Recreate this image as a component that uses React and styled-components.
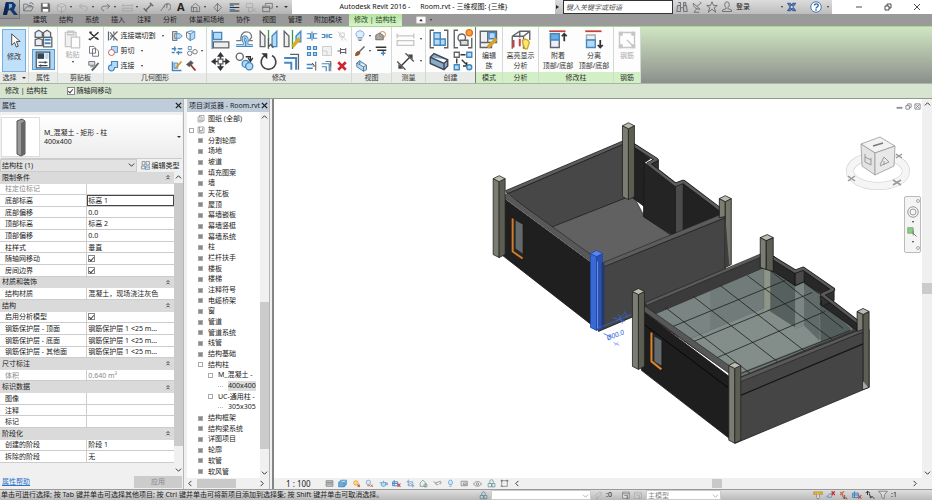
import React, { useState } from "react";
import styled, { createGlobalStyle, css } from "styled-components";

const GlobalStyle = createGlobalStyle`
  * {
    box-sizing: border-box;
  }

  body {
    margin: 0;
    overflow: hidden;
    background: #f0f0f0;
    color: #222;
    font: 7px/10px "Noto Sans", "Noto Sans CJK SC", sans-serif;
  }

  button,
  input,
  select {
    margin: 0;
    padding: 0;
    border: 0;
    border-radius: 0;
    background: none;
    color: inherit;
    font: inherit;
  }

  ul {
    margin: 0;
    padding: 0;
    list-style: none;
  }
`;

/* ---------- icons ---------- */

const Svg = styled.svg`
  display: block;
  flex: none;
  width: ${props => props.$size || 12}px;
  height: ${props => props.$size || 12}px;
  fill: none;
  stroke: #606468;
  stroke-width: 1.1;
  opacity: ${props => (props.$dim ? 0.35 : 1)};
`;

const BLUE = "#4486bf";
const SKY = "#b4daf5";

const shapes = {
  open: <path d="M1 13V3h5l1 2h5v2M1 13l4-6h10l-3 6zM9 2l4-1 2 3" />,
  save: (
    <>
      <path d="M2 2h11l1 1v11H2z" fill="#666" />
      <path d="M4 2h7v5H4zM4 10h8v4H4z" fill="#fff" stroke="none" />
    </>
  ),
  cube: <path d="M2 5l6-3 6 3v6l-6 4-6-4zM2 5l6 3 6-3M8 8v7" fill="#ddd" />,
  undo: <path d="M6 3L2 6l4 4M2 6h8c5 0 5 6 0 7" />,
  redo: <path d="M10 3l4 3-4 4M14 6H6c-5 0-5 6 0 7" />,
  measure: <path d="M1 5h14M1 3v4M15 3v4M1 9h14v4H1z" />,
  dimension: <path d="M3 13L13 3M1 9l5 5M10 1l5 5" strokeWidth="1.8" />,
  tag: <path d="M1 13L6 6M6 8a5 5 0 1 1 6 4M8 4h4M10 4v5" />,
  house: <path d="M2 7l6-5 6 5v7H2zM5 14V8h5v6M2 7l3 1" />,
  section: <path d="M8 2L3 8l5 6 6-6zM8 2v12" />,
  thin: (
    <>
      <path d="M1 3h14M1 8h14M1 13h14" stroke="#333" strokeWidth="1.6" />
      <path d="M1 5h6M1 11h8" stroke={BLUE} strokeWidth="2" />
    </>
  ),
  hidden: <path d="M2 2h9v6H2zM5 8v6h4M10 9l5 5M15 9l-5 5" />,
  windows: <path d="M5 5V2h10v7h-4M1 6h10v8H1zM1 8h10" />,
  binoculars: <path d="M2 6h4v8H1zM10 6h4l1 8h-5zM3 2h3v4M10 6V2h3v4M6 9h4" fill="#bbb" />,
  dish: <path d="M3 3c0 5 3 8 9 8M3 3l9 8M8 7l5-4M7 11l-3 4h7M12 1l2 2" />,
  star: <path d="M8 1l2 5h5l-4 3 2 6-5-4-5 4 2-6-4-3h5z" />,
  user: <path d="M5 5a3 4 0 1 1 6 0c0 3-2 3-2 5l5 2v2H2v-2l5-2c0-2-2-2-2-5z" />,
  exchange: (
    <>
      <path d="M2 3h4l7 10h-4zM13 3H9L2 13h4z" fill="#5d82b7" stroke="#244e8c" />
      <path d="M6 8h4" stroke="#fff" />
    </>
  ),
  help: (
    <>
      <circle cx="8" cy="8" r="7" fill="#fff" stroke="#2762a5" />
      <path d="M6 6c0-3 5-3 5 0 0 2-3 2-3 4M8 11v2" stroke="#2762a5" strokeWidth="1.8" />
    </>
  ),
  cursor: <path d="M5 1v12l3-3 2 5 2-1-2-5h4z" fill="#fff" stroke="#444" strokeWidth="1" />,
  typeProps: (
    <>
      <path d="M1 3l3-2 3 2v4H1zM8 3l3-2 3 2v4H8zM1 9l3-1 3 1v5H1z" fill="#e8eef3" />
      <path d="M8 7h7v8H8z" fill="#fff" />
      <path d="M9 9h5M9 12h5" stroke={BLUE} strokeWidth="1.6" />
    </>
  ),
  props: (
    <>
      <path d="M2 1h12v14H2z" fill="#fff" stroke="#456" />
      <path d="M3 2h6v5H3z" fill="#345" stroke="none" />
      <path d="M10 2h3v5h-3z" fill={SKY} stroke="none" />
      <path d="M4 10h8M4 13h8M10 9v2M6 12v2" stroke="#345" />
    </>
  ),
  paste: (
    <>
      <path d="M2 2h9v12H2zM4 1h5v3H4z" fill="#ddd" />
      <path d="M7 6h7v9H7z" fill="#fff" />
    </>
  ),
  cut: <path d="M2 3l10 9M14 3L4 12M2 3l3 0M14 13l-3-3M4 13l-3-1" stroke="#333" strokeWidth="2" />,
  copy: <path d="M2 2h6l2 2v7H2zM6 5h5l3 3v7H6z" fill="#fff" />,
  match: (
    <>
      <path d="M1 2h8v5H1zM3 9h5" fill="#ddd" />
      <path d="M14 4l-6 7-3 3" strokeWidth="2.5" />
    </>
  ),
  cope: <path d="M2 2v12M4 8h4l6-6M8 8l6 6M4 3l4 5-4 5M9 2v3M9 14v-3" strokeWidth="1.6" />,
  cutGeom: (
    <>
      <path d="M6 2h8v8H6z" fill={SKY} stroke={BLUE} />
      <circle cx="6" cy="10" r="4" fill="#fff" stroke="#b44" />
    </>
  ),
  joinGeom: (
    <path d="M6 2h8v8h-4c0 7-9 5-8 0 0-2 2-4 4-3z" fill={SKY} stroke={BLUE} strokeWidth="1.6" />
  ),
  wallJoin: (
    <>
      <path d="M2 2h6v3H5v6h3v3H2z" fill="#ccc" />
      <path d="M7 5h5l3 3-3 3H7z" fill={SKY} stroke={BLUE} />
    </>
  ),
  splitFace: (
    <>
      <path d="M2 3l5 2v9l-5-4z" fill="#eee" />
      <path d="M7 5l6-3v9l-6 3zM2 3l6-2 5 1" fill={SKY} stroke={BLUE} />
    </>
  ),
  beamJoin: <path d="M1 5h6M9 5h6M1 10h4M7 10h8M5 2v6M10 8v5" stroke={BLUE} strokeWidth="1.8" />,
  unjoin: (
    <>
      <path d="M3 2h4v4H3z" stroke={BLUE} />
      <circle cx="5" cy="11" r="3" />
      <circle cx="12" cy="9" r="3" />
    </>
  ),
  paint: (
    <>
      <path d="M2 2v12h12" stroke={BLUE} strokeWidth="2" />
      <path d="M4 4h5v7H4z" fill={SKY} stroke={BLUE} />
      <path d="M6 11l8-9" stroke="#d79a2d" strokeWidth="2.5" />
    </>
  ),
  hammer: (
    <>
      <path d="M2 6l6-5 3 3-5 5z" fill="#555" />
      <path d="M8 7l6 7" stroke="#933" strokeWidth="2.5" />
    </>
  ),
  align: (
    <>
      <path d="M1 0v16" stroke={BLUE} />
      <path d="M2 2h7v6H2z" fill={SKY} stroke={BLUE} />
      <path d="M2 10h13v5H2z" fill="#eee" />
    </>
  ),
  offset: (
    <>
      <path d="M1 9h4V6c1-6 9-6 9 0l-2 3h3" stroke="#777" />
      <path d="M1 13h7v-2C4 4 12 4 10 11v2h5" stroke={BLUE} strokeWidth="2.6" />
      <path d="M1 13h7v-2C4 4 12 4 10 11v2h5" stroke={SKY} />
    </>
  ),
  mirrorAxis: (
    <>
      <path d="M1 1v13h4V5z" fill="#eee" />
      <path d="M15 1v13h-4V5z" fill={SKY} stroke={BLUE} />
      <path d="M8 0v16" stroke="#359b45" />
      <path d="M8 7v7l2-2 2 3" stroke="#555" fill="#fff" />
    </>
  ),
  mirrorDraw: (
    <>
      <path d="M1 1v13h4V5z" fill="#eee" />
      <path d="M15 1v9h-4V5z" fill={SKY} stroke={BLUE} />
      <path d="M8 0v16" stroke="#359b45" />
      <path d="M8 14l6-7" stroke="#d8ad24" strokeWidth="2.8" />
    </>
  ),
  move: (
    <>
      <path d="M8 2v12M2 8h12" stroke="#333" strokeWidth="1.4" />
      <path d="M8 0l3 4H5zM8 16l3-4H5zM0 8l4-3v6zM16 8l-4-3v6z" fill="#333" stroke="none" />
      <path d="M6 6h4v4H6z" fill="#fff" />
    </>
  ),
  copyItems: (
    <>
      <circle cx="4" cy="4" r="3" />
      <path d="M9 4h4v3M11 5l2 3 2-3" stroke="#333" />
      <circle cx="9" cy="10" r="3" fill={SKY} stroke={BLUE} />
      <circle cx="12" cy="12" r="3" fill={SKY} stroke={BLUE} />
    </>
  ),
  rotate: (
    <>
      <path d="M5 3a6.2 6.2 0 1 0 6 0" stroke="#444" strokeWidth="1.4" />
      <path d="M2 1h5v5z" fill="#333" stroke="none" />
    </>
  ),
  trim: (
    <>
      <path d="M1 5h10v10M1 9h6v6" stroke={BLUE} strokeWidth="1.6" />
      <path d="M6 2h7v7M13 2v13" />
    </>
  ),
  split: <path d="M1 5h5v6H1M15 5h-5v6h5M8 2v12" stroke={BLUE} strokeWidth="1.5" />,
  gap: <path d="M1 6h4v4H1M15 6h-4v4h4M6 8h4M8 5v6" stroke={BLUE} strokeWidth="1.5" />,
  unpin: <path d="M2 2l12 12M5 4h6v5H5zM8 9v5" />,
  array: <path d="M2 2h4v4H2zM10 2h4v4h-4zM2 10h4v4H2zM10 10h4v4h-4z" fill={SKY} stroke={BLUE} strokeWidth="1.6" />,
  scale: <path d="M2 2h12v12H2zM2 8h6v6" fill="#ddd" />,
  pin: <path d="M2 8h4M6 4v8M6 6h7v4H6M13 4v8" strokeWidth="1.4" />,
  extend: (
    <>
      <path d="M1 6h8M1 11h8" stroke={BLUE} strokeWidth="2" />
      <path d="M13 2v12M8 4l3 3M9 8h3" stroke="#333" />
    </>
  ),
  remove: <path d="M3 3l10 10M13 3L3 13" stroke="#d02434" strokeWidth="3.6" />,
  bulb: (
    <>
      <path d="M5 10C0 5 4 1 8 1s8 4 3 9z" fill="#dcefff" stroke="#6e9ad0" />
      <path d="M5 12h6M6 14h4" />
    </>
  ),
  displace: (
    <>
      <path d="M1 7l5-3 5 3v6H1z" fill="#aaa" />
      <circle cx="10" cy="6" r="4" stroke="#c27b32" />
    </>
  ),
  brush: (
    <>
      <path d="M14 2L7 9" strokeWidth="2" />
      <path d="M2 14c0-4 3-7 6-4 0 3-3 4-6 4z" fill="#9c5b27" stroke="#7b4219" />
    </>
  ),
  linework: (
    <>
      <path d="M1 3h14M3 7h12" stroke="#333" strokeWidth="1.8" />
      <path d="M8 11h6M11 8v6" stroke={BLUE} strokeWidth="2" />
    </>
  ),
  box: <path d="M1 4l4-3 9 6v6l-4 2-9-6zM1 4l9 5 4-2M10 9v6M5 1v5" fill={SKY} stroke="#446a8c" />,
  angle: (
    <>
      <path d="M3 13L13 3" stroke="#333" />
      <path d="M1 8l7 7M8 1l7 7" stroke="#555" />
      <path d="M2 14v-4l4 4zM14 2v4l-4-4z" fill="#444" stroke="none" />
    </>
  ),
  assembly: (
    <>
      <path d="M4 1H1v14h3M12 1h3v14h-3" />
      <path d="M4 3h5v5h4v5H4zM4 8h5v5" fill={SKY} stroke={BLUE} />
    </>
  ),
  group: (
    <>
      <path d="M4 1H1v14h3M12 15h3V7" />
      <circle cx="7" cy="7" r="3" />
      <path d="M6 9h6v4H6z" fill="#ddd" />
      <circle cx="13" cy="3" r="2.5" fill="#f6a040" stroke="#e0741f" />
    </>
  ),
  parts: <path d="M1 5l3-3 11 5v5l-3 3L1 10zM1 5l11 5 3-3M12 10v5" fill="#86aecb" stroke="#445" />,
  similar: (
    <>
      <path d="M1 1h4v4H1z" />
      <path d="M11 1h4v4h-4zM1 11h4v4H1z" fill={SKY} stroke={BLUE} />
      <path d="M6 3h4M3 6v4M7 7l4 4M11 9v3H8" stroke="#333" />
      <circle cx="13" cy="13" r="2" fill={SKY} stroke={BLUE} />
    </>
  ),
  editFamily: (
    <>
      <path d="M1 1h13v9H1zM1 10h9v4H1zM7 1v9" fill="#eef2f5" />
      <path d="M8 2h5v5H8z" fill={SKY} stroke={BLUE} />
      <path d="M7 14l7-7" stroke="#d8a22a" strokeWidth="2.8" />
    </>
  ),
  analysis: (
    <>
      <path d="M1 5l6-4h8v7M1 5h9l5-4M10 5v10M7 1v5M1 5v10" />
      <path d="M2 8v6M7 7v6" stroke="#c54040" strokeWidth="1.6" />
      <path d="M9 9c2-3 7-1 5 3l-1 3h-2z" fill="#ffe873" stroke="#d3a72a" />
    </>
  ),
  attach: (
    <>
      <path d="M1 1h13" stroke="#c63f34" strokeWidth="1.4" />
      <path d="M2 3h7v11H2z" fill="#eef" />
      <path d="M2 3h7v5H2z" fill="#66afe0" stroke={BLUE} />
      <path d="M13 9V3M11 5l2-2 2 2" stroke="#333" strokeWidth="1.4" />
    </>
  ),
  detach: (
    <>
      <path d="M1 1h13" stroke="#c63f34" strokeWidth="1.4" />
      <path d="M2 4h7v4H2z" fill="#eee" stroke="#aaa" />
      <path d="M2 8h7v6H2z" fill={SKY} stroke={BLUE} />
      <path d="M13 8v6M11 12l2 2 2-2" stroke="#333" strokeWidth="1.4" />
    </>
  ),
  rebar: (
    <>
      <path d="M2 2h12v12H2zM8 8l4 4" />
      <path d="M2 2h2v2H2zM12 2h2v2h-2zM2 12h2v2H2zM12 12h2v2h-2z" fill="#555" />
    </>
  ),
  media: (
    <>
      <path d="M1 3h14v10H1z" fill="#fff" stroke="#ddd" />
      <path d="M5 10l3-4 3 4z" fill="#333" stroke="none" />
    </>
  ),
  editType: (
    <>
      <path d="M2 1h5v6H2zM9 1h6v6H9zM1 9h6v5H1z" />
      <path d="M8 9h7v6H8zM8 12h7" stroke={BLUE} />
    </>
  ),
  sheets: <path d="M2 4h8v10H2zM5 4V1h9v11h-4M4 8h4M4 11h4" />,
  family: <path d="M2 2h12v12H2zM5 2v7h6V4M5 9v3h6" />,
  detail: <path d="M2 3h12v10H2zM3 6h10M3 9h10" fill="#ccc" />,
  style: <path d="M1 6l4-4h10v8l-4 4H1zM1 6h10l4-4M11 6v8" fill="#68abd8" stroke={BLUE} />,
  sun: (
    <>
      <circle cx="7" cy="7" r="4" fill="#ffd97a" stroke="#d48b29" />
      <path d="M10 10l4 4M14 10l-4 4" stroke="#d24b35" strokeWidth="1.8" />
    </>
  ),
  shadow: (
    <>
      <circle cx="6" cy="6" r="4" fill="#d6e6f3" stroke="#7290a8" />
      <path d="M4 12h5M10 10l4 4M14 10l-4 4" stroke="#b45a5a" strokeWidth="1.6" />
    </>
  ),
  teapot: <path d="M4 6h8v5l-2 2H6l-2-2zM4 8L1 6M12 7h3v3h-3M8 3v3" fill={SKY} stroke={BLUE} />,
  crop: (
    <>
      <path d="M1 5h9v7H1zM4 2v10M1 8h9" stroke={BLUE} strokeWidth="1.6" />
      <path d="M10 8l5 6M15 8l-5 6" stroke="#c84141" strokeWidth="1.8" />
    </>
  ),
  showCrop: <path d="M4 1v11h11M1 5h11v10M5 11c1-4 5-4 6 0" stroke={BLUE} />,
  lock3d: <path d="M2 7l5-5 5 5v6H2zM9 9h5v5H9z" stroke="#4e8770" />,
  glasses: <path d="M1 5l4 2 8-3M5 7c0 4 3 5 4 2M13 4c3 3 0 6-2 4" />,
  reveal: <path d="M6 10C3 6 5 2 8 2s5 4 2 8zM6 13h4" fill="#cdeaff" stroke={BLUE} />,
  temp: <path d="M2 4h11v8H2zM6 7h5v3H6z" />,
  eye: <path d="M1 9c3-6 11-6 14 0-3 5-11 5-14 0zM6 9a2 2 0 1 0 4 0 2 2 0 1 0-4 0" />,
  constraints: <path d="M3 3h10v10H3zM1 3h4M11 3h4M1 13h4M3 1v4M13 1v4" />,
  workset: <path d="M2 8h6v6H2zM5 8V3l3-2 3 2v4M9 8h5v6H9z" stroke="#3a7f8a" />,
  press: <path d="M3 8l6-6 5 1-5 7-4 5v-5z" fill="#ccc" />,
  design: <path d="M1 2h12v11H1zM1 5h12M4 8h6v5M9 8v7" fill="#ddd" />,
  link: (
    <>
      <path d="M1 3h14v4H1z" fill="#dfb84a" stroke="#b48c22" />
      <path d="M6 7v5l2 3 2-3V7" fill="#eee" />
    </>
  ),
  underlay: (
    <>
      <path d="M1 11l5-5h5l-3 6z" stroke={BLUE} />
      <path d="M9 2l5 6M14 2L9 8" stroke="#c33" strokeWidth="2" />
    </>
  ),
  pinned: (
    <>
      <path d="M2 3l5 6M2 8l6-6M5 8l3 6" stroke="#c96a45" strokeWidth="2" />
      <path d="M9 8v6l2-2 2 3" stroke="#333" />
    </>
  ),
  drag: <path d="M4 8V2M1 5l3-3 4 3M7 6l2 7 2-3 4 4" stroke="#333" strokeWidth="1.6" />,
  filter: <path d="M1 2h14l-5 6v6l-4-2V8z" fill="#ddd" />
};

const Icon = ({ name, size, dim }) => (
  <Svg viewBox="0 0 16 16" $size={size} $dim={dim} aria-hidden="true">
    {shapes[name]}
  </Svg>
);

const Caret = styled.span`
  flex: none;
  border: 2px solid transparent;
  border-top-color: #333;
  border-bottom-width: 0;
  ${props =>
    props.$small &&
    css`
      border-width: 1px 1px 0;
      border-top-width: 2px;
    `}
`;

const chevrons = {
  up: "M1 5l3-3 3 3",
  down: "M1 3l3 3 3-3",
  left: "M5 1L2 4l3 3",
  right: "M3 1l3 3-3 3"
};

const Chevron = ({ dir, dim }) => (
  <Svg viewBox="0 0 8 8" $size={7} $dim={dim} aria-hidden="true">
    <path d={chevrons[dir]} stroke="#333" />
  </Svg>
);

/* ---------- title bar ---------- */

const Window = styled.div`
  display: flex;
  flex-direction: column;
  height: 100vh;
`;

const TopRow = styled.header`
  display: flex;
  background: #9c9c9c;
`;

const AppButton = styled.button`
  width: 20px;
  height: 19px;
  margin-bottom: -5px;
  display: grid;
  place-items: center;
  background: linear-gradient(#bdbdbd, #8d8d8d);
  border-right: 1px solid #777;
  border-bottom: 1px solid #777;
  z-index: 1;
`;

const TitleBar = styled.div`
  flex: 1;
  display: flex;
  height: 14px;
  background: #fff;
`;

const QuickAccess = styled.div`
  width: 272px;
  display: flex;
  align-items: center;
  justify-content: space-between;
  padding: 0 4px 0 3px;
  background: linear-gradient(#d8d8d8, #b4b4b4);
`;

const ToolButton = styled.button`
  display: flex;
  align-items: center;
  justify-content: center;
  gap: ${props => props.$gap || 3}px;
  ${props => props.$bold && "font: bold 11px/12px 'Open Sans', sans-serif;"}
`;

const WindowTitle = styled.div`
  flex: 1;
  display: flex;
  align-items: center;
  justify-content: center;
  gap: 10px;
  white-space: nowrap;
  color: #111;
`;

const InfoCenter = styled.div`
  width: 277px;
  display: flex;
  align-items: center;
  gap: 3px;
  padding-right: 3px;
  background: linear-gradient(#dcdcdc, #bcbcbc);
`;

const SearchArrow = styled.button`
  width: 5px;
  padding-left: 1px;

  &::after {
    content: "";
    display: block;
    border: 2px solid transparent;
    border-left: 3px solid #222;
    border-right: 0;
  }
`;

const SearchInput = styled.input`
  width: 110px;
  height: 14px;
  padding: 0 2px;
  background: #fff;
  border: 1px solid #333;
  font-style: italic;

  &::placeholder {
    color: #555;
    opacity: 1;
  }
`;

const Spacer = styled.span`
  flex: ${props => (props.$width ? `0 0 ${props.$width}px` : 1)};
`;

const WindowButtons = styled.div`
  width: 100px;
  display: flex;
  align-items: center;
  justify-content: space-around;
  padding-left: 12px;
`;

/* ---------- ribbon ---------- */

const Tabs = styled.nav`
  display: flex;
  align-items: stretch;
  height: 12px;
  padding-left: 27px;
  background: #9a9a9a;
`;

const Tab = styled.button`
  padding: 0 6px;
  color: #222;
  white-space: nowrap;
  ${props =>
    props.$active &&
    css`
      margin-left: 1px;
      padding: 0 5px;
      color: #234b1c;
      background: linear-gradient(#b5e3a0, #d9f3cc);
    `}
`;

const Ribbon = styled.div`
  display: flex;
  height: 58px;
  border-top: 1px solid #a9d596;
  border-bottom: 1px solid #a8b8a0;
  background: linear-gradient(#cfe6c1, #8c8f8c);
`;

const PanelBox = styled.section`
  width: ${props => props.$width}px;
  display: flex;
  flex-direction: column;
  background: #fdfdfd;
  border-right: 1px solid ${props => (props.$last ? "#777" : "#d5d9d5")};
`;

const PanelBody = styled.div`
  flex: 1;
  display: flex;
  justify-content: center;
  align-items: flex-start;
  padding-top: 1px;
`;

const PanelLabel = styled.div`
  height: 11px;
  display: flex;
  align-items: center;
  justify-content: center;
  gap: 5px;
  color: #333;
  background: ${props => (props.$green ? "#d3efc5" : "#e9ebe9")};
`;

const Panel = ({ title, width, green, last, caret, children }) => (
  <PanelBox $width={width} $last={last}>
    <PanelBody>{children}</PanelBody>
    <PanelLabel $green={green}>
      {title}
      {caret && <Caret />}
    </PanelLabel>
  </PanelBox>
);

const IconGrid = styled.div`
  display: grid;
  grid-template-columns: repeat(${props => props.$cols}, ${props => props.$cell}px);
  grid-auto-rows: ${props => (props.$big ? 22 : 15)}px;
  align-items: center;
  justify-items: center;
`;

const LargeButton = styled.button`
  width: ${props => props.$width || 24}px;
  height: 44px;
  display: flex;
  flex-direction: column;
  align-items: center;
  gap: 1px;
  padding-top: 2px;
  color: ${props => (props.disabled ? "#aaa" : "#333")};
  white-space: nowrap;
`;

const SelectedTool = styled(LargeButton)`
  height: 43px;
  margin-top: 1px;
  padding-top: 3px;
  gap: 4px;
  background: #bfe0f8;
  border: 1px solid #76aedb;
`;

const ToggleTool = styled.button`
  width: 23px;
  height: 21px;
  display: grid;
  place-items: center;
  ${props =>
    props.$on &&
    css`
      background: #aed6f4;
      border: 1px solid #5c9ccc;
    `}
`;

const TextTool = styled.button`
  display: flex;
  align-items: center;
  gap: 2px;
  width: 100%;
  white-space: nowrap;

  ${Caret} {
    margin-left: 4px;
  }
`;

const GeometryTools = styled.div`
  display: grid;
  grid-template-columns: 64px 14px 19px;
  grid-auto-rows: 15px;
  align-items: center;
`;

const OptionsBar = styled.div`
  display: flex;
  align-items: center;
  gap: 14px;
  height: 15px;
  padding-left: 5px;
  background: #d7e5d0;
  border-bottom: 1px solid #8e9b8a;
`;

const OptionLabel = styled.label`
  display: flex;
  align-items: center;
  gap: 2px;
  padding-left: 5px;
`;

const Checkbox = styled.input.attrs({ type: "checkbox" })`
  appearance: none;
  display: block;
  width: ${props => props.$size || 7}px;
  height: ${props => props.$size || 7}px;
  background: #fff;
  border: 1px solid #888;

  &:checked::after {
    content: "";
    display: block;
    width: 2px;
    height: 4px;
    margin: 0 auto;
    border: solid #444;
    border-width: 0 1px 1px 0;
    transform: rotate(40deg);
  }
`;

/* ---------- docked palettes ---------- */

const Workspace = styled.main`
  flex: 1;
  display: flex;
  min-height: 0;
  background: #f0f0f0;
`;

const Palette = styled.section`
  width: ${props => props.$width}px;
  display: flex;
  flex-direction: column;
  margin-right: ${props => props.$gap}px;
  border-right: 1px solid #b5b5b5;
  background: #f0f0f0;
`;

const PaletteHeader = styled.div`
  display: flex;
  align-items: center;
  justify-content: space-between;
  height: 13px;
  padding: 0 1px 0 2px;
  background: #bfcddb;
  white-space: nowrap;
`;

const CloseButton = styled.button`
  width: 8px;
  height: 10px;
  display: grid;
  place-items: center;
`;

const TypeSelector = styled.button`
  display: flex;
  align-items: center;
  gap: 4px;
  height: 44px;
  margin: 3px 1px 0;
  padding-right: 1px;
  background: linear-gradient(#fff, #ececec);
  border-bottom: 1px solid #ccc;
  text-align: left;
`;

const TypePreview = styled.span`
  width: 39px;
  height: 40px;
  display: grid;
  place-items: center;
  background: #fff;
  border: 1px solid #ddd;
`;

const TypeName = styled.span`
  flex: 1;
  line-height: 9px;
`;

const FilterRow = styled.div`
  display: flex;
  height: 13px;
`;

const SelectBox = styled.div`
  position: relative;
  width: ${props => props.$width}px;
  height: 100%;
  background: ${props => props.$bg || "#fff"};
  border: 1px solid #ccc;
  color: ${props => props.$color || "inherit"};

  svg {
    position: absolute;
    right: 1px;
    top: 1px;
    pointer-events: none;
  }

  select {
    display: block;
    appearance: none;
    width: 100%;
    height: 100%;
    padding-left: 1px;
    line-height: 9px;
  }
`;

const EditTypeButton = styled.button`
  flex: 1;
  display: flex;
  align-items: center;
  justify-content: center;
  gap: 2px;
`;

const ScrollArea = styled.div`
  flex: 1;
  display: flex;
  min-height: 0;
`;

const TableArea = styled.div`
  flex: 1;
`;

const PropertyTable = styled.table`
  width: 100%;
  height: 291px;
  border-collapse: collapse;
  table-layout: fixed;
  background: #fff;

  th,
  td {
    padding: 0 1px;
    line-height: 9px;
    font-weight: normal;
    text-align: left;
    white-space: nowrap;
    overflow: hidden;
    border-bottom: 1px solid #ccc;
  }

  th {
    width: 87px;
    padding-left: 5px;
    border-right: 1px solid #ccc;
  }
`;

const GroupCell = styled.th`
  && {
    padding-left: 2px;
    background: #dadada;
    border-color: #dadada;
  }

  div {
    display: flex;
    justify-content: space-between;
    align-items: center;
    padding-right: 1px;
  }
`;

const ValueInput = styled.input`
  display: block;
  width: 100%;
  height: 9px;
  ${props => props.$focused && "outline: 1px solid #444;"}
`;

const PropRow = styled.tr`
  color: ${props => (props.$muted ? "#888" : "inherit")};
`;

const ScrollTrack = styled.div`
  flex: none;
  width: ${props => props.$width || 9}px;
  display: grid;
  grid-template-rows: 11px ${props => props.$before}fr ${props => props.$thumb}fr ${props => props.$after}fr 11px;
  justify-items: center;
  align-items: center;
  background: #f0f0f0;

  span {
    grid-row: 3;
    width: 100%;
    height: 100%;
    background: #cbcbcb;
  }

  svg:last-child {
    grid-row: 5;
  }
`;

const PaletteFooter = styled.div`
  display: flex;
  justify-content: space-between;
  align-items: center;
  height: 14px;
  padding: 0 1px 0 2px;
`;

const HelpLink = styled.a`
  color: #2a74c9;
`;

const ApplyButton = styled.button`
  width: 48px;
  height: 12px;
  background: #cccccc;
  color: #888;
`;

const Tree = styled.ul`
  flex: 1;
  min-width: 0;
  display: flex;
  flex-direction: column;
  padding: 2px 0 1px;
  background: #fff;
`;

const TreeItem = styled.li`
  flex: 1;
  display: flex;
  align-items: center;
  gap: ${props => (props.$level === 0 ? 3 : 5)}px;
  min-height: 0;
  padding-left: ${props => [2, 11, 21, 31][props.$level]}px;
  white-space: nowrap;

  b {
    font-weight: normal;
    background: ${props => (props.$selected ? "#dcdcdc" : "none")};
  }
`;

const Toggle = styled.span`
  flex: none;
  width: 5px;
  height: 5px;
  border: ${props => (props.$blank ? "0" : "1px solid #aaa")};
  background: ${props => (props.$blank ? "none" : props.$open ? "#fff" : "#888")};
  ${props =>
    props.$leaf &&
    css`
      height: 1px;
      border: 0;
      background: none;
      border-bottom: 1px dotted #bbb;
    `}
`;

const BottomScroll = styled.div`
  flex: ${props => (props.$grow ? 1 : "none")};
  display: grid;
  grid-template-columns: 9px ${props => props.$before}fr ${props => props.$thumb}fr ${props => props.$after}fr 11px;
  align-items: center;
  height: 11px;
  background: #f0f0f0;

  span {
    grid-column: 3;
    height: 9px;
    background: #c9c9c9;
  }

  svg:last-child {
    grid-column: 5;
  }
`;

/* ---------- drawing view ---------- */

const View = styled.section`
  flex: 1;
  min-width: 0;
  display: flex;
  flex-direction: column;
  border-left: 2px solid #858585;
`;

const Canvas = styled.div`
  position: relative;
  flex: 1;
  min-width: 0;
  background: #fff;
`;

const Scene = styled.svg`
  position: absolute;
  width: 100%;
  height: 100%;
  stroke: #161616;
  stroke-width: 0.8;
  stroke-linejoin: round;
`;

const ViewButtons = styled.div`
  position: absolute;
  top: 4px;
  right: 1px;
  display: flex;
  gap: 2px;
`;

const CubeSvg = styled.svg`
  position: absolute;
  top: 34px;
  right: 10px;
  width: 68px;
  height: 62px;
  fill: #eee;
  stroke: #999;
`;

const NavigationBar = styled.div`
  position: absolute;
  top: 97px;
  right: 1px;
  width: 17px;
  height: 57px;
  display: flex;
  flex-direction: column;
  align-items: center;
  justify-content: space-between;
  padding: 2px 0;
  background: #f4f4f4;
  border: 1px solid #bbb;
  border-radius: 2px;
`;

const NavDot = styled.span`
  width: 4px;
  height: 4px;
  align-self: flex-end;
  border: 1px solid #aaa;
  border-radius: 2px;
`;

const ViewFooter = styled.div`
  display: flex;
  height: 11px;
  background: #f0f0f0;
`;

const ViewControls = styled.div`
  width: 250px;
  display: flex;
  align-items: center;
  justify-content: space-between;
  padding: 0 3px 0 12px;
`;

const Scale = styled.span`
  width: 34px;
  font-size: 8px;
`;

const ScrollCorner = styled.div`
  width: 10px;
`;

const StatusBar = styled.footer`
  display: flex;
  align-items: center;
  height: 11px;
  background: linear-gradient(#dedede, #b9b9b9);
  border-top: 1px solid #999;
`;

const StatusText = styled.div`
  flex: 1;
  min-width: 0;
  padding-left: 1px;
  white-space: nowrap;
`;

const StatusTools = styled.div`
  width: 453px;
  height: 100%;
  display: flex;
  align-items: center;
  gap: 3px;
`;

/* ---------- data ---------- */

const tabs = ["建筑", "结构", "系统", "插入", "注释", "分析", "体量和场地", "协作", "视图", "管理", "附加模块"];

const quickTools = [
  ["open"],
  ["save"],
  ["cube", true, true],
  ["undo", true, true],
  ["redo", true],
  ["measure", true, true],
  ["dimension"],
  ["tag"],
  ["A"],
  ["house", true],
  ["section"],
  ["thin"],
  ["hidden", false, true],
  ["windows", true]
];

const groups = [
  {
    title: "限制条件",
    rows: [
      ["柱定位标记", "", "muted"],
      ["底部标高", "标高 1", "focused"],
      ["底部偏移", "0.0"],
      ["顶部标高", "标高 2"],
      ["顶部偏移", "0.0"],
      ["柱样式", "垂直"],
      ["随轴网移动", true],
      ["房间边界", true]
    ]
  },
  { title: "材质和装饰", rows: [["结构材质", "混凝土，现场浇注灰色"]] },
  {
    title: "结构",
    rows: [
      ["启用分析模型", true],
      ["钢筋保护层 - 顶面", "钢筋保护层 1 <25 m..."],
      ["钢筋保护层 - 底面", "钢筋保护层 1 <25 m..."],
      ["钢筋保护层 - 其他面", "钢筋保护层 1 <25 m..."]
    ]
  },
  { title: "尺寸标注", rows: [["体积", "0.640 m³", "muted"]] },
  { title: "标识数据", rows: [["图像", ""], ["注释", ""], ["标记", ""]] },
  { title: "阶段化", rows: [["创建的阶段", "阶段 1"], ["拆除的阶段", "无"]] }
];

const closedBefore = [
  "分割轮廓",
  "场地",
  "坡道",
  "填充图案",
  "墙",
  "天花板",
  "屋顶",
  "幕墙嵌板",
  "幕墙竖梃",
  "幕墙系统",
  "柱",
  "栏杆扶手",
  "楼板",
  "楼梯",
  "注释符号",
  "电缆桥架",
  "窗",
  "管道",
  "管道系统",
  "线管",
  "结构基础"
];
const closedAfter = ["结构框架", "结构梁系统", "详图项目", "轮廓", "软管", "软风管"];

const tree = [
  { level: 0, name: "图纸 (全部)", icon: "sheets", blank: true },
  { level: 0, name: "族", icon: "family", open: true },
  ...closedBefore.map(name => ({ level: 1, name })),
  { level: 1, name: "结构柱", open: true },
  { level: 2, name: "M_混凝土 -", open: true },
  { level: 3, name: "400x400", selected: true },
  { level: 2, name: "UC-通用柱 -", open: true },
  { level: 3, name: "305x305" },
  ...closedAfter.map(name => ({ level: 1, name }))
];

const viewTools = [
  "detail",
  "style",
  "sun",
  "shadow",
  "teapot",
  "crop",
  "showCrop",
  "lock3d",
  "glasses",
  "reveal",
  "temp",
  "eye",
  "workset",
  "constraints"
];

/* ---------- parts ---------- */

const Close = ({ label }) => (
  <CloseButton aria-label={label}>
    <Svg viewBox="0 0 8 8" $size={7}>
      <path d="M1 1l6 6M7 1L1 7" stroke="#222" strokeWidth="1.6" />
    </Svg>
  </CloseButton>
);

const Top = () => (
  <TopRow>
    <AppButton aria-label="Revit">
      <Svg viewBox="0 0 16 16" $size={16}>
        <path d="M4 1h7l3 3-2 5 4 5h-4l-4-5-2 1-1 4H1z" fill="#163a70" stroke="none" />
        <path d="M7 3h3v3L7 8z" fill="#7ea6d4" stroke="none" />
        <path d="M4 1l2 2-1 11H1z" fill="#0d254e" stroke="none" />
      </Svg>
    </AppButton>
    <TitleBar>
      <QuickAccess>
        {quickTools.map(([name, caret, dim]) => (
          <ToolButton key={name} aria-label={name} $bold={name === "A"}>
            {name === "A" ? "A" : <Icon name={name} size={11} dim={dim} />}
            {caret && <Caret $small />}
          </ToolButton>
        ))}
        <Caret />
      </QuickAccess>
      <WindowTitle>
        <span>Autodesk Revit 2016 -</span>
        <span>Room.rvt - 三维视图: {"{三维}"}</span>
      </WindowTitle>
      <InfoCenter>
        <SearchArrow aria-label="search" />
        <SearchInput placeholder="键入关键字或短语" aria-label="键入关键字或短语" />
        <Icon name="binoculars" />
        <Icon name="dish" />
        <Icon name="star" />
        <Icon name="user" />
        <ToolButton>登录</ToolButton>
        <Spacer />
        <Caret $small />
        <Icon name="exchange" />
        <Spacer $width={6} />
        <ToolButton $gap={5} aria-label="help">
          <Icon name="help" />
          <Caret $small />
        </ToolButton>
      </InfoCenter>
      <WindowButtons>
        {["M1 4h6", "M1 3h4v4H1zM3 3V1h4v4H5", "M1 1l6 6M7 1L1 7"].map(d => (
          <ToolButton key={d} aria-label="window">
            <Svg viewBox="0 0 8 8" $size={8}>
              <path d={d} strokeWidth="0.8" stroke="#222" />
            </Svg>
          </ToolButton>
        ))}
      </WindowButtons>
    </TitleBar>
  </TopRow>
);

const RibbonTabs = () => (
  <>
    <Tabs>
      {tabs.map(name => (
        <Tab key={name}>{name}</Tab>
      ))}
      <Tab $active>修改 | 结构柱</Tab>
      <Spacer $width={14} />
      <ToolButton $gap={4} aria-label="ribbon state">
        <Icon name="media" size={10} />
        <Caret $small />
      </ToolButton>
    </Tabs>
    <Ribbon>
      <Panel title="选择" width={29} caret>
        <SelectedTool>
          <Icon name="cursor" size={15} />
          修改
        </SelectedTool>
      </Panel>
      <Panel title="属性" width={29}>
        <div>
          <ToggleTool aria-label="type properties">
            <Icon name="typeProps" size={19} />
          </ToggleTool>
          <ToggleTool $on aria-label="properties">
            <Icon name="props" size={18} />
          </ToggleTool>
        </div>
      </Panel>
      <Panel title="剪贴板" width={46}>
        <LargeButton $width={27} disabled>
          <Icon name="paste" size={19} dim />
          粘贴
          <Caret $small />
        </LargeButton>
        <IconGrid $cols={1} $cell={16}>
          <Icon name="cut" />
          <Icon name="copy" />
          <Icon name="match" />
        </IconGrid>
      </Panel>
      <Panel title="几何图形" width={103}>
        <GeometryTools>
          <TextTool>
            <Icon name="cope" />
            连接端切割
            <Caret $small />
          </TextTool>
          <Icon name="wallJoin" />
          <Icon name="splitFace" />
          <TextTool>
            <Icon name="cutGeom" />
            剪切
            <Caret $small />
          </TextTool>
          <Icon name="beamJoin" />
          <ToolButton aria-label="unjoin">
            <Icon name="unjoin" />
            <Caret $small />
          </ToolButton>
          <TextTool>
            <Icon name="joinGeom" />
            连接
            <Caret $small />
          </TextTool>
          <Icon name="paint" />
          <Icon name="hammer" />
        </GeometryTools>
      </Panel>
      <Panel title="修改" width={145}>
        <IconGrid $cols={4} $cell={24} $big>
          {["align", "offset", "mirrorAxis", "mirrorDraw", "move", "copyItems", "rotate", "trim"].map(name => (
            <Icon key={name} name={name} size={19} />
          ))}
        </IconGrid>
        <IconGrid $cols={3} $cell={15}>
          {["split", "gap", "unpin", "array", "scale", "pin", "extend", "trim", "remove"].map(name => (
            <Icon key={name} name={name} dim={name === "unpin" || name === "scale"} />
          ))}
        </IconGrid>
      </Panel>
      <Panel title="视图" width={40}>
        <IconGrid $cols={2} $cell={19}>
          <ToolButton aria-label="hide">
            <Icon name="bulb" />
            <Caret $small />
          </ToolButton>
          <Icon name="displace" />
          <ToolButton aria-label="override">
            <Icon name="brush" />
            <Caret $small />
          </ToolButton>
          <Icon name="linework" />
          <Icon name="box" />
        </IconGrid>
      </Panel>
      <Panel title="测量" width={34}>
        <IconGrid $cols={1} $cell={32} $big>
          <ToolButton $gap={5} aria-label="measure">
            <Icon name="measure" size={19} dim />
            <Caret $small />
          </ToolButton>
          <ToolButton $gap={5} aria-label="dimension">
            <Icon name="angle" size={19} />
            <Caret $small />
          </ToolButton>
        </IconGrid>
      </Panel>
      <Panel title="创建" width={50} last>
        <IconGrid $cols={2} $cell={24} $big>
          {["assembly", "group", "parts", "similar"].map(name => (
            <Icon key={name} name={name} size={20} />
          ))}
        </IconGrid>
      </Panel>
      <Panel title="模式" width={27} green>
        <LargeButton>
          <Icon name="editFamily" size={20} />
          <span>
            编辑
            <br />族
          </span>
        </LargeButton>
      </Panel>
      <Panel title="分析" width={36} green>
        <LargeButton $width={34}>
          <Icon name="analysis" size={20} />
          <span>
            高亮显示
            <br />
            分析
          </span>
        </LargeButton>
      </Panel>
      <Panel title="修改柱" width={75} green>
        <LargeButton $width={36}>
          <Icon name="attach" size={20} />
          <span>
            附着
            <br />
            顶部/底部
          </span>
        </LargeButton>
        <LargeButton $width={36}>
          <Icon name="detach" size={20} />
          <span>
            分离
            <br />
            顶部/底部
          </span>
        </LargeButton>
      </Panel>
      <Panel title="钢筋" width={27} green>
        <LargeButton disabled>
          <Icon name="rebar" size={20} dim />
          钢筋
        </LargeButton>
      </Panel>
    </Ribbon>
  </>
);

const PropertyValue = ({ label, value, mode }) => {
  const [checked, setChecked] = useState(value === true);
  if (value === true) {
    return <Checkbox aria-label={label} checked={checked} onChange={e => setChecked(e.target.checked)} />;
  }
  return <ValueInput aria-label={label} defaultValue={value} $focused={mode === "focused"} />;
};

const Properties = () => (
  <Palette $width={184} $gap={3}>
    <PaletteHeader>
      属性
      <Close label="close properties" />
    </PaletteHeader>
    <TypeSelector>
      <TypePreview>
        <svg width="10" height="39" viewBox="0 0 10 39">
          <path d="M1 3l5-2 3 2v33l-4 2-4-2z" fill="#999" stroke="#555" />
          <path d="M5 5l4-2v33l-4 2z" fill="#666" />
        </svg>
      </TypePreview>
      <TypeName>
        M_混凝土 - 矩形 - 柱
        <br />
        400x400
      </TypeName>
      <Caret />
    </TypeSelector>
    <FilterRow>
      <SelectBox $width={137} $bg="#e2e2e2">
        <select aria-label="category">
          <option>结构柱 (1)</option>
        </select>
        <Chevron dir="down" />
      </SelectBox>
      <EditTypeButton>
        <Icon name="editType" size={9} />
        编辑类型
      </EditTypeButton>
    </FilterRow>
    <ScrollArea>
      <TableArea>
        <PropertyTable>
          <tbody>
            {groups.map(group => (
              <React.Fragment key={group.title}>
                <tr>
                  <GroupCell colSpan={2}>
                    <div>
                      {group.title}
                      <Svg viewBox="0 0 8 8" $size={6}>
                        <path d="M2 4l2-2 2 2M2 7l2-2 2 2" stroke="#222" />
                      </Svg>
                    </div>
                  </GroupCell>
                </tr>
                {group.rows.map(([label, value, mode]) => (
                  <PropRow key={label} $muted={mode === "muted"}>
                    <th scope="row">{label}</th>
                    <td>
                      <PropertyValue label={label} value={value} mode={mode} />
                    </td>
                  </PropRow>
                ))}
              </React.Fragment>
            ))}
          </tbody>
        </PropertyTable>
      </TableArea>
      <ScrollTrack $before={0} $thumb={264} $after={18}>
        <Chevron dir="up" />
        <span />
        <Chevron dir="down" />
      </ScrollTrack>
    </ScrollArea>
    <PaletteFooter>
      <HelpLink href="#help">属性帮助</HelpLink>
      <ApplyButton disabled>应用</ApplyButton>
    </PaletteFooter>
  </Palette>
);

const Browser = () => (
  <Palette $width={83} $gap={2}>
    <PaletteHeader>
      项目浏览器 - Room.rvt
      <Close label="close browser" />
    </PaletteHeader>
    <ScrollArea>
      <Tree>
        {tree.map(item => (
          <TreeItem key={item.name} $level={item.level} $selected={item.selected}>
            <Toggle $blank={item.blank} $open={item.open} $leaf={item.level === 3} />
            {item.icon && <Icon name={item.icon} size={8} />}
            <b>{item.name}</b>
          </TreeItem>
        ))}
      </Tree>
      <ScrollTrack $before={178} $thumb={147} $after={18}>
        <Chevron dir="up" />
        <span />
        <Chevron dir="down" />
      </ScrollTrack>
    </ScrollArea>
    <BottomScroll $before={1} $thumb={35} $after={20}>
      <Chevron dir="left" />
      <span />
      <Chevron dir="right" />
    </BottomScroll>
  </Palette>
);

// x/y is the centre of the cap, h how far the shaft runs down
const Column = ({ x, y, h, selected }) => (
  <g transform={`translate(${x} ${y})`} stroke={selected ? "#2048a8" : "#22231f"}>
    <path d={`M-6 0L0 3V${h}l-6-3z`} fill={selected ? "#3a69d6" : "#7c7d72"} />
    <path d={`M0 3L6 0V${h - 3}l-6 3z`} fill={selected ? "#2a50b0" : "#5c5d53"} />
    <path d="M-6 0L0-3 6 0 0 3z" fill={selected ? "#5a86f2" : "#bcbdb0"} />
  </g>
);

const Model = () => (
  <Scene viewBox="273 100 649 378" role="img" aria-label="三维视图">
    {/* open room */}
    <path d="M506 193L624 143l3 55-77 30z" fill="#474747" />
    <path d="M550 228l76-30 8 0 10 19 30 21-70 30z" fill="#616161" strokeWidth="0.6" />
    <path d="M632 146l18 13-6 4v44l-12-9z" fill="#222" />
    <path d="M650 163l8 6v-9l-4-2z" fill="#333" />
    <path d="M644 163l31 24v51l-32-21z" fill="#242424" />
    <path d="M675 187l8-4v50l-8 5z" fill="#4b4b4b" />
    <path d="M683 184l37 27v8l-37 15z" fill="#222" />
    <path d="M631 144l25 16-8 4 27 21 8-3 37 28" fill="none" strokeWidth="4" />
    <path d="M631 144l25 16-8 4 27 21 8-3 37 28" fill="none" stroke="#5e5e5e" strokeWidth="2.6" />
    <path d="M505 191l118-50 1 3-117 50z" fill="#5e5e5e" />
    <Column x={628} y={126} h={74} />
    <path d="M502 198l95 70v62l-95-74z" fill="#1f1f1f" />
    <path d="M502 197l4-3 94 68-3 5z" fill="#585858" strokeWidth="0.5" />
    <path d="M598 269l127-51v60l-127 54z" fill="#454545" />
    <path d="M598 265l122-50 7 2-128 52z" fill="#5c5c5c" strokeWidth="0.5" />
    <path d="M511 217l12 7v36l-12-8z" fill="#262626" stroke="#2b1608" />
    <path d="M515 221l7 4v29l-7-5z" fill="#626a6e" stroke="none" />
    <path d="M512 219v33l10 7" fill="none" stroke="#cf7d2b" strokeWidth="2" />
    <Column x={498.5} y={179} h={79} />
    <path d="M719 199l6 3v15l-6 1z" fill="#7c7d72" />
    <path d="M725 202l6-3v66l-6 3z" fill="#74766a" />
    <path d="M725 217v51l4-2z" fill="#3f4040" stroke="none" />
    <path d="M719 199l6-3 6 3-6 3z" fill="#bcbdb0" />
    <Column x={596} y={254} h={77} selected />
    <path d="M601 263v66l3-1v-65z" fill="#26386c" stroke="none" />
    <path d="M597 262v67" stroke="#7fa0ee" />
    <g stroke="#3567d6" fill="none">
      <path d="M597 329l34-14M603 334l8 4M612 318l12 4M616 322l8-8M618 315l4 9M624 312l3 6" />
    </g>
    <text x="607" y="341" transform="rotate(-20 607 341)" fill="#3567d6" stroke="none" fontSize="7" fontStyle="italic">
      Ø00.0
    </text>
    <path d="M613 343l6 3M614 346l4-3" stroke="#7aa2ea" />

    {/* glazed room */}
    <path d="M644 306l117-50 13 1 83 68 2 10-118 47-98-69z" fill="#3b3b3b" />
    <path d="M655 315l108-46 7 1 25 17 25 8 33 35-112 47z" fill="#6b7573" stroke="none" />
    <path d="M686 341l78-32 6 2 27 18 7-3 17 15-78 31-8 2z" fill="#838d8a" stroke="none" />
    <path d="M655 315l108-46v40l-80 33z" fill="#717b79" stroke="none" />
    <path d="M655 315l55-23v38l-26 11z" fill="#7a8482" stroke="none" />
    <path d="M770 271l25 16v41l-25-16z" fill="#56605e" stroke="none" />
    <path d="M795 287l9-4v43l-9 4z" fill="#7c8684" stroke="none" />
    <path d="M804 284l15 11v46l-15-15z" fill="#616c6a" stroke="none" />
    <path d="M819 296l33 35-31 13z" fill="#535e5c" stroke="none" />
    <path d="M764 268h6v41l-6 3z" fill="#8c9586" stroke="none" />
    <g fill="none" stroke="#1b2120">
      <path d="M665 308l85 66M693 297l84 65M720 286l85 66M747 276l85 64M770 271l73 58" />
      <path d="M670 328l115-47M691 343l121-50M715 359l110-47M741 374l109-43" />
    </g>
    <path d="M770 257l25 17v12l-25-16zM804 269l27 21-9 5-18-12zM822 297l35 27v7l-37-26z" fill="#282828" />
    <path d="M795 273l9-4v13l-9 4z" fill="#4a4a4a" />
    <path d="M820 297l2 10 12-6V289z" fill="#303030" />
    <path d="M769 256l26 16 8-3 30 21-11 5 36 28" fill="none" strokeWidth="4" />
    <path d="M769 256l26 16 8-3 30 21-11 5 36 28" fill="none" stroke="#5a5a5a" strokeWidth="2.6" />
    <path d="M645 303l116-49 1 3-116 49z" fill="#5a5a5a" strokeWidth="0.5" />
    <path d="M760 238l6 3v29l-6-2z" fill="#7c7d72" />
    <path d="M766 241l7-3v34l-7-2z" fill="#5c5d53" />
    <path d="M760 238l7-3 6 3-7 3z" fill="#bcbdb0" />
    <path d="M641 311l93 70v62l-93-72z" fill="#1e1e1e" />
    <path d="M641 310l4-3 92 65-3 6z" fill="#575757" strokeWidth="0.5" />
    <path d="M641 323l93 70" stroke="#000" />
    <path d="M735 383l134-53v58l-134 56z" fill="#454545" />
    <path d="M738 379l120-48 11-1-130 53z" fill="#5a5a5a" strokeWidth="0.5" />
    <path d="M738 397l131-55" strokeWidth="1.2" />
    <path d="M650 331l12 8v33l-12-9z" fill="#252525" />
    <path d="M654 337l7 4v25l-7-4z" fill="#626a6e" stroke="none" />
    <path d="M651 333v29l10 8" fill="none" stroke="#e0822a" strokeWidth="2" />
    <Column x={638} y={292} h={78} />
    <Column x={734.5} y={366} h={78} />
    <path d="M857 312l6 3v15l-6 2z" fill="#7c7d72" />
    <path d="M863 315l6-3v76l-6 2z" fill="#5c5d53" />
    <path d="M863 382l5 6-5 2z" fill="#aaa" stroke="none" />
    <path d="M857 312l6-3 6 3-6 3z" fill="#bcbdb0" />
  </Scene>
);

const ViewCube = () => (
  <CubeSvg viewBox="844 134 68 62" aria-label="ViewCube">
    <ellipse cx="878" cy="172" rx="28" ry="15" fill="none" stroke="#ccc" strokeWidth="8" />
    <ellipse cx="878" cy="172" rx="28" ry="15" fill="none" stroke="#f5f5f5" strokeWidth="7" />
    <g fill="none" stroke="#999" strokeWidth="1.5">
      <path d="M848 177l7 5M848 182l7-5M893 181l8 5M893 186l8-5M896 155l6 4M896 159l6-4" />
    </g>
    <path d="M861 145l19-7 15 9-20 7z" fill="#f2f2f2" strokeWidth="0.8" />
    <path d="M861 145l14 9v22l-13-9z" fill="#e3e3e3" strokeWidth="0.8" />
    <path d="M875 154l20-7-1 20-19 9z" fill="#e8e8e8" strokeWidth="0.8" />
    <path d="M873 147l10-3" stroke="#777" strokeWidth="1.4" />
    <path d="M865 155v8l6 3v-7M865 158l6 3M880 166l4-8 5 5-9 4M884 162v4" fill="none" stroke="#999" />
  </CubeSvg>
);

const DrawingView = () => (
  <View>
    <ScrollArea>
      <Canvas>
        <Model />
        <ViewButtons>
          {["M1 5h6v1H1z", "M1 3h4v4H1zM3 3V1h4v4H5", "M1 1h6v6H1zM2 2l4 4M6 2L2 6"].map(d => (
            <ToolButton key={d} aria-label="view window">
              <Svg viewBox="0 0 8 8" $size={7}>
                <path d={d} strokeWidth="0.8" />
              </Svg>
            </ToolButton>
          ))}
        </ViewButtons>
        <ViewCube />
        <NavigationBar>
          <NavDot />
          <Svg viewBox="0 0 16 16" $size={12}>
            <circle cx="8" cy="8" r="7" stroke="#888" />
            <circle cx="8" cy="8" r="4" stroke="#888" />
          </Svg>
          <Caret $small />
          <Svg viewBox="0 0 16 16" $size={11}>
            <path d="M1 1h8v8H1z" fill="#8fc98a" stroke="#6aa765" />
            <path d="M9 5v7M9 9l5 5" />
          </Svg>
          <Caret $small />
          <NavDot />
        </NavigationBar>
      </Canvas>
      <ScrollTrack $width={10} $before={173} $thumb={11} $after={173}>
        <Chevron dir="up" />
        <span />
        <Chevron dir="down" />
      </ScrollTrack>
    </ScrollArea>
    <ViewFooter>
      <ViewControls>
        <Scale>1 : 100</Scale>
        {viewTools.map(name => (
          <Icon key={name} name={name} size={9} />
        ))}
        <Chevron dir="left" />
      </ViewControls>
      <BottomScroll $grow $before={179} $thumb={10} $after={189}>
        <i />
        <span />
        <Chevron dir="right" />
      </BottomScroll>
      <ScrollCorner />
    </ViewFooter>
  </View>
);

const Status = () => (
  <StatusBar>
    <StatusText>
      单击可进行选择; 按 Tab 键并单击可选择其他项目; 按 Ctrl 键并单击可将新项目添加到选择集; 按 Shift 键并单击可取消选择。
    </StatusText>
    <StatusTools>
      <Icon name="workset" size={9} />
      <SelectBox $width={100}>
        <select aria-label="workset">
          <option> </option>
        </select>
        <Chevron dir="down" dim />
      </SelectBox>
      <Icon name="press" size={9} dim />
      <span>:0</span>
      <Spacer $width={4} />
      <Icon name="design" size={9} />
      <Icon name="design" size={9} dim />
      <SelectBox $width={75} $color="#888">
        <select aria-label="design option">
          <option>主模型</option>
        </select>
        <Chevron dir="down" dim />
      </SelectBox>
      <Spacer />
      {["link", "underlay", "pinned", "crop", "drag", "filter"].map(name => (
        <Icon key={name} name={name} size={10} />
      ))}
      <span>:1</span>
      <Spacer $width={32} />
    </StatusTools>
  </StatusBar>
);

const App = () => (
  <Window lang="zh-CN">
    <GlobalStyle />
    <Top />
    <RibbonTabs />
    <OptionsBar>
      <span>修改 | 结构柱</span>
      <OptionLabel>
        <Checkbox defaultChecked $size={8} />
        随轴网移动
      </OptionLabel>
    </OptionsBar>
    <Workspace>
      <Properties />
      <Browser />
      <DrawingView />
    </Workspace>
    <Status />
  </Window>
);

export default App;
